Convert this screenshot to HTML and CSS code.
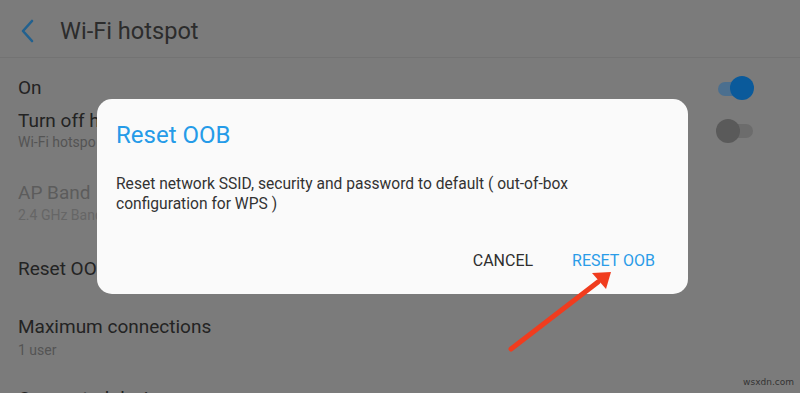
FILE: index.html
```html
<!DOCTYPE html>
<html>
<head>
<meta charset="utf-8">
<link rel="stylesheet" href="styles.css">
</head>
<body>
<div class="screen">
  <header class="appbar">
    <svg class="back" width="14" height="24" viewBox="0 0 14 24"><path d="M12 2 L3 12 L12 22" fill="none" stroke="#22618f" stroke-width="2.6" stroke-linecap="round" stroke-linejoin="round"/></svg>
    <span class="apptitle">Wi-Fi hotspot</span>
  </header>
  <main class="list">
    <div class="item row i-on">
      <div class="title">On</div>
      <div class="toggle on"><span class="track"></span><span class="knob"></span></div>
    </div>
    <div class="item row i-turn">
      <div class="clip">
        <div class="title">Turn off h</div>
        <div class="sub">Wi-Fi hotspo</div>
      </div>
      <div class="toggle off"><span class="track"></span><span class="knob"></span></div>
    </div>
    <div class="item i-band clip">
      <div class="title dis">AP Band</div>
      <div class="sub dis">2.4 GHz Band</div>
    </div>
    <div class="item i-reset clip">
      <div class="title">Reset OOB</div>
    </div>
    <div class="item i-max">
      <div class="title">Maximum connections</div>
      <div class="sub">1 user</div>
    </div>
    <div class="item i-conn">
      <div class="title">Connected devices</div>
    </div>
  </main>

  <div class="dialog">
    <div class="dtitle">Reset OOB</div>
    <div class="dbody">Reset network SSID, security and password to default ( out-of-box configuration for WPS )</div>
    <div class="dactions">
      <span class="btn cancel">CANCEL</span>
      <span class="btn primary">RESET OOB</span>
    </div>
  </div>

  <svg class="arrow" width="800" height="393" viewBox="0 0 800 393">
    <line x1="511" y1="349" x2="598" y2="282" stroke="#f03c1e" stroke-width="5" stroke-linecap="round"/>
    <polygon points="611,272 592,273 606,289" fill="#f03c1e"/>
  </svg>
  <div class="watermark">wsxdn.com</div>
</div>
</body>
</html>
```

FILE: styles.css
```css
* { box-sizing: border-box; }
html, body { margin: 0; padding: 0; }
body {
  width: 800px;
  height: 393px;
  overflow: hidden;
  background: #7b7b7b;
  font-family: Roboto, "Noto Sans", "Liberation Sans", sans-serif;
}
.screen {
  position: relative;
  width: 800px;
  height: 393px;
  overflow: hidden;
}
.appbar {
  height: 58px;
  border-bottom: 1px solid #737373;
  display: flex;
  align-items: flex-start;
  padding-top: 17px;
  padding-left: 20px;
}
.back { margin-top: 2px; }
.apptitle {
  margin-left: 26px;
  font-size: 23.6px;
  line-height: 28px;
  color: #2c2c2c;
}
.list { padding: 0 46px 0 18px; }
.item { display: block; }
.row {
  display: flex;
  justify-content: space-between;
  align-items: center;
}
.clip {
  max-width: 79px;
  overflow: hidden;
}
.title {
  font-size: 19px;
  line-height: 22px;
  color: #232323;
  white-space: nowrap;
}
.sub {
  font-size: 14px;
  line-height: 18px;
  color: #545454;
  white-space: nowrap;
}
.title.dis { color: #5c5c5c; }
.sub.dis { color: #666666; }
.i-on { margin-top: 18px; }
.i-turn { margin-top: 10px; }
.i-turn .sub { margin-top: 1px; }
.i-band { margin-top: 31px; }
.i-band .sub { margin-top: 2px; }
.i-reset { margin-top: 34px; }
.i-max { margin-top: 36px; }
.i-max .sub { margin-top: 3px; }
.i-conn { margin-top: 29px; }

.toggle {
  position: relative;
  width: 38px;
  height: 24px;
  flex: none;
}
.toggle .track {
  position: absolute;
  left: 1px; right: 1px; top: 5px; bottom: 5px;
  border-radius: 7px;
}
.toggle .knob {
  position: absolute;
  top: 0;
  width: 24px;
  height: 24px;
  border-radius: 50%;
}
.toggle.on .track { background: #4b6f8f; left: 2px; right: 8px; top: 6px; bottom: 4px; }
.toggle.on .knob { right: 0; background: #0a5a9b; }
.toggle.off .track { background: #6c6c6c; }
.toggle.off .knob { left: 0; background: #5a5a5a; }

.dialog {
  position: absolute;
  left: 97px;
  top: 99px;
  width: 591px;
  height: 195px;
  background: #fafafa;
  border-radius: 15px;
  padding: 22px 33px 0 19px;
}
.dtitle {
  font-size: 24px;
  line-height: 28px;
  color: #259be8;
}
.dbody {
  margin-top: 25px;
  font-size: 15.6px;
  line-height: 20px;
  color: #333333;
  width: 540px;
}
.dactions {
  margin-top: 37px;
  display: flex;
  justify-content: flex-end;
  gap: 39px;
}
.btn {
  font-size: 16px;
  line-height: 20px;
}
.cancel { color: #2e2e2e; }
.primary { color: #2a9ce8; }

.arrow {
  position: absolute;
  left: 0;
  top: 0;
}
.watermark {
  position: absolute;
  right: 6px;
  top: 377px;
  font-size: 9px;
  color: #333;
  font-family: "DejaVu Sans", sans-serif;
}
```
